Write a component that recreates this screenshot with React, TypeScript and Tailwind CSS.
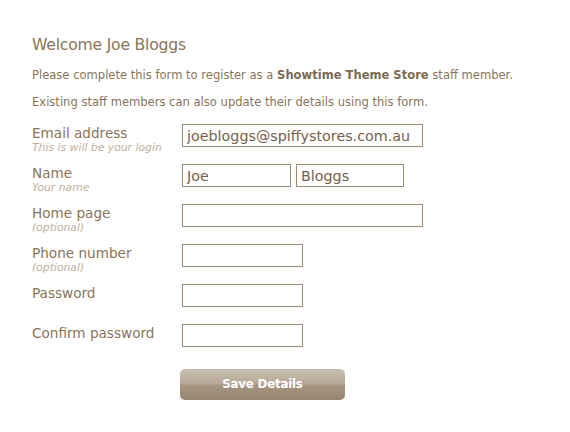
const font = { fontFamily: '"DejaVu Sans", "Liberation Sans", sans-serif' };

type Row = { label: string; hint?: string; fields: { w: string; value?: string }[] };

const rows: Row[] = [
  { label: "Email address", hint: "This is will be your login", fields: [{ w: "w-[241px]", value: "joebloggs@spiffystores.com.au" }] },
  { label: "Name", hint: "Your name", fields: [{ w: "w-[109px]", value: "Joe" }, { w: "w-[108px]", value: "Bloggs" }] },
  { label: "Home page", hint: "(optional)", fields: [{ w: "w-[241px]" }] },
  { label: "Phone number", hint: "(optional)", fields: [{ w: "w-[121px]" }] },
  { label: "Password", fields: [{ w: "w-[121px]" }] },
  { label: "Confirm password", fields: [{ w: "w-[121px]" }] },
];

export default function App() {
  return (
    <div className="w-[570px] h-[432px] bg-white pl-[32px] pt-[35px] text-[#8a7459]" style={font}>
      <h1 className="text-[15.6px] leading-[20px] tracking-[-0.2px]">Welcome Joe Bloggs</h1>
      <p className="mt-[12px] text-[11.55px] leading-[16px]">
        Please complete this form to register as a <b className="text-[#7d6a52]">Showtime Theme Store</b> staff member.
      </p>
      <p className="mt-[11px] text-[11.55px] leading-[16px]">Existing staff members can also update their details using this form.</p>

      <div className="mt-[14px] flex flex-col">
        {rows.map((r) => (
          <div key={r.label} className="flex h-[40px]">
            <div className="w-[150px] flex flex-col">
              <span className="text-[13.6px] leading-[18px]">{r.label}</span>
              {r.hint && <span className="-mt-[1px] text-[10.8px] leading-[13px] italic text-[#bfb09c]">{r.hint}</span>}
            </div>
            <div className="flex gap-[5px]">
              {r.fields.map((f, i) => (
                <input
                  key={i}
                  readOnly
                  defaultValue={f.value ?? ""}
                  className={`${f.w} h-[23px] border border-[#9c8b74] px-[4px] text-[14.3px] text-[#76624b] outline-none`}
                  style={font}
                />
              ))}
            </div>
          </div>
        ))}
      </div>

      <button
        type="button"
        className="ml-[148px] mt-[5px] w-[165px] h-[31px] rounded-[5px] text-white text-[11.8px] font-semibold tracking-[-0.2px] bg-[linear-gradient(to_bottom,#cbc0b1_0%,#b6a896_48%,#a59580_52%,#97866f_100%)]"
        style={font}
      >
        Save Details
      </button>
    </div>
  );
}
